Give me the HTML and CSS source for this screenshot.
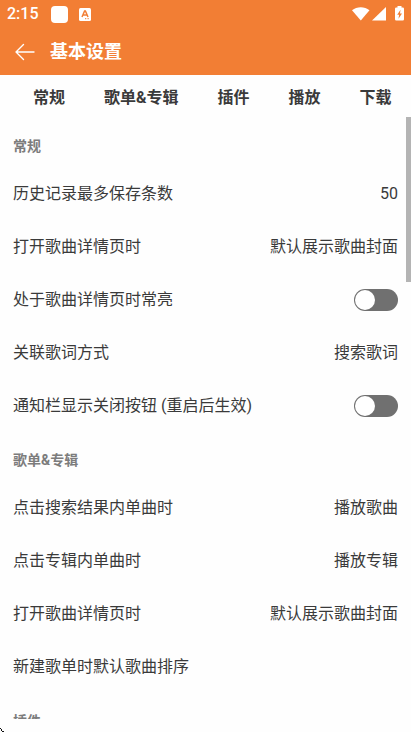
FILE: index.html
```html
<!DOCTYPE html>
<html lang="zh-CN">
<head>
<meta charset="utf-8">
<meta name="viewport" content="width=device-width, initial-scale=1">
<title>基本设置</title>
<link rel="stylesheet" href="styles.css">
</head>
<body>
<div class="status">
  <span class="clock">2:15</span>
  <span class="app-dot"></span>
  <svg class="app-a" width="12" height="13" viewBox="0 0 12 13"><rect width="12" height="13" rx="1.5" fill="#fff"/><path d="M3 9 5.6 3h.8L9 9M4 7h4" fill="none" stroke="#f27e34" stroke-width="1.5"/><path d="M6 10.700h1.300M8.500 10.700h1.300" stroke="#f27e34" stroke-width="1"/></svg>
  <svg class="signals" width="54" height="16" viewBox="0 0 54 16" fill="#fff"><path d="M0 4.200C5 .1 12.500.1 17.500 4.200L8.800 14.500z"/><path d="M34 1v13.500H20z"/><path fill-rule="evenodd" d="M45.500 1.500V0h4v1.500h1.300q1.200 0 1.200 1.200v10.600q0 1.200-1.200 1.200h-6.600q-1.200 0-1.200-1.200V2.700q0-1.200 1.200-1.200zM48.500 3.700 45.200 8.700h1.900l-.6 4L50 7.500h-2z"/></svg>
</div>
<header class="bar">
  <button class="back" type="button" aria-label="返回"><svg width="20" height="18" viewBox="0 0 20 18" fill="none" stroke="#fff" stroke-width="1.400" stroke-linecap="round" stroke-linejoin="round"><path d="M19 9H1M8.500 1.500 1 9l7.500 7.500"/></svg></button>
  <h1>基本设置</h1>
</header>
<nav class="tabs">
  <a href="#general">常规</a>
  <a href="#sheet">歌单&amp;专辑</a>
  <a href="#plugin">插件</a>
  <a href="#play">播放</a>
  <a href="#download">下载</a>
</nav>
<main class="list">
  <div class="thumb"></div>
  <h2 id="general">常规</h2>
  <div class="row"><span>历史记录最多保存条数</span><span>50</span></div>
  <div class="row"><span>打开歌曲详情页时</span><span>默认展示歌曲封面</span></div>
  <label class="row"><span>处于歌曲详情页时常亮</span><input class="switch" type="checkbox" role="switch"></label>
  <div class="row"><span>关联歌词方式</span><span>搜索歌词</span></div>
  <label class="row"><span>通知栏显示关闭按钮 (重启后生效)</span><input class="switch" type="checkbox" role="switch"></label>
  <h2 id="sheet">歌单&amp;专辑</h2>
  <div class="row"><span>点击搜索结果内单曲时</span><span>播放歌曲</span></div>
  <div class="row"><span>点击专辑内单曲时</span><span>播放专辑</span></div>
  <div class="row"><span>打开歌曲详情页时</span><span>默认展示歌曲封面</span></div>
  <div class="row"><span>新建歌单时默认歌曲排序</span></div>
  <h2 id="plugin">插件</h2>
</main>
<footer class="edge"><svg width="4" height="4" viewBox="0 0 4 4" fill="#111"><path d="M0 0h1v1H0zM1 1h1v1H1zM2 3h2v1H2zM1 2h1v1H1z"/></svg></footer>
</body>
</html>
```
FILE: styles.css
```css
* {
  box-sizing: border-box;
}

body {
  margin: 0;
  height: 100vh;
  display: flex;
  flex-direction: column;
  overflow: hidden;
  background: #fefefe;
  color: #3a3a3a;
  font: 16px/24px Roboto, "Noto Sans CJK SC", sans-serif;
}

.status {
  flex: none;
  display: flex;
  align-items: center;
  height: 28px;
  padding: 0 5px 0 7px;
  background: #f27e34;
  color: #fff;
}

.clock {
  width: 44px;
  font-weight: 500;
}

.app-dot {
  width: 17px;
  height: 17px;
  border-radius: 4px;
  background: #fff;
}

.app-a {
  margin-left: 11px;
}

.signals {
  margin-left: auto;
}

.bar {
  flex: none;
  display: flex;
  align-items: center;
  gap: 15px;
  height: 47px;
  padding: 1px 15px 0;
  background: #f27e34;
  color: #fff;
}

.back {
  display: flex;
  padding: 0;
  border: 0;
  background: none;
}

h1 {
  margin: 0;
  font-size: 18px;
  font-weight: 700;
}

.tabs {
  flex: none;
  display: flex;
  align-items: center;
  gap: 39px;
  height: 42px;
  padding: 4px 0 0 33px;
  overflow: hidden;
}

.tabs a {
  flex: none;
  color: #3a3a3a;
  font-weight: 700;
  text-decoration: none;
}

.list {
  position: relative;
  flex: 1;
  min-height: 0;
  padding: 1px 13px 0;
  overflow: hidden;
}

.thumb {
  position: absolute;
  top: 0;
  right: 0;
  width: 5px;
  height: 165px;
  background: #b4b4b4;
}

h2 {
  margin: 0;
  padding: 18px 0 11px;
  color: #7c7c7c;
  font-size: 14px;
  line-height: 20px;
  font-weight: 700;
}

.row {
  display: flex;
  align-items: center;
  justify-content: space-between;
  height: 53px;
}

.switch {
  appearance: none;
  display: flex;
  width: 44px;
  height: 22px;
  margin: 0;
  padding: 1px;
  border-radius: 11px;
  background: #707070;
}

.switch::before {
  content: "";
  width: 20px;
  height: 20px;
  border-radius: 50%;
  background: #fff;
}

.switch:checked {
  justify-content: flex-end;
  background: #f27e34;
}

.edge {
  flex: none;
  display: flex;
  align-items: flex-end;
  height: 13px;
}
```
